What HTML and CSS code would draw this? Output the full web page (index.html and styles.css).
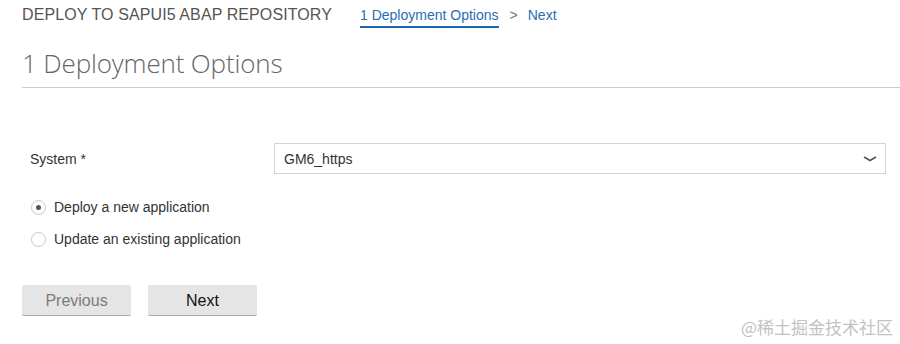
FILE: index.html
```html
<!DOCTYPE html>
<html lang="en">
<head>
  <meta charset="UTF-8" />
  <title>Deploy to SAPUI5 ABAP Repository</title>
  <link rel="stylesheet" href="styles.css">
</head>
<body>

  <div class="wizard">
    <div class="wizard-header">
      <span class="wizard-title">DEPLOY TO SAPUI5 ABAP REPOSITORY</span>
      <div class="steps">
        <a class="step active">1 Deployment Options</a>
        <span class="sep">&gt;</span>
        <a class="step">Next</a>
      </div>
    </div>

    <h1 class="page-title">1 Deployment Options</h1>

    <div class="form">
      <div class="form-row">
        <label class="form-label">System *</label>
        <div class="select">
          <span class="select-value">GM6_https</span>
          <svg class="chevron" width="14" height="6" viewBox="0 0 14 6">
            <polyline points="1,1 7,4.5 13,1" fill="none" stroke="#555" stroke-width="1.6" />
          </svg>
        </div>
      </div>

      <div class="radios">
        <label class="radio">
          <span class="radio-circle checked"></span>
          Deploy a new application
        </label>
        <label class="radio">
          <span class="radio-circle"></span>
          Update an existing application
        </label>
      </div>
    </div>

    <div class="buttons">
      <button class="btn disabled">Previous</button>
      <button class="btn">Next</button>
    </div>
  </div>

  <div class="watermark">@稀土掘金技术社区</div>

</body>
</html>
```

FILE: styles.css
```css
body {
  margin: 0;
  font-family: "Liberation Sans", Arial, sans-serif;
  color: #333;
  background: #fff;
}
.wizard {
  padding: 5px 0 0 22px;
}
.wizard-header {
  display: flex;
  align-items: flex-start;
  height: 23px;
}
.wizard-title {
  font-size: 16px;
  line-height: 20px;
  letter-spacing: 0.1px;
  color: #555;
}
.steps {
  display: flex;
  margin-left: 28px;
  font-size: 14px;
  line-height: 20px;
}
.step {
  color: #2a6db0;
}
.step.active {
  padding-bottom: 1px;
  border-bottom: 2px solid #1d68ad;
}
.sep {
  color: #777;
  margin: 0 10px 0 11px;
}
.page-title {
  margin: 17px 0 0;
  padding-bottom: 6px;
  border-bottom: 1px solid #ccc;
  font-family: "Open Sans", sans-serif;
  font-weight: 300;
  font-size: 26px;
  line-height: 36px;
  letter-spacing: -0.15px;
  color: #666;
}
.form {
  padding: 55px 14px 0 8px;
}
.form-row {
  display: flex;
  align-items: center;
}
.form-label {
  width: 244px;
  font-size: 14px;
}
.select {
  flex: 1;
  display: flex;
  align-items: center;
  justify-content: space-between;
  height: 29px;
  border: 1px solid #d4d4d4;
  padding: 0 8px 0 9px;
  font-size: 14px;
  color: #333;
}
.chevron {
  display: block;
}
.radios {
  padding-top: 17px;
}
.radio {
  display: flex;
  align-items: center;
  height: 32px;
  font-size: 14px;
  color: #333;
}
.radio-circle {
  box-sizing: border-box;
  width: 15px;
  height: 15px;
  margin: 0 8px 0 1px;
  border: 1px solid #c8c8c8;
  border-radius: 50%;
  display: flex;
  align-items: center;
  justify-content: center;
}
.radio-circle.checked::after {
  content: "";
  width: 5px;
  height: 5px;
  border-radius: 50%;
  background: #555;
}
.buttons {
  display: flex;
  gap: 17px;
  margin-top: 30px;
}
.btn {
  width: 109px;
  height: 31px;
  border: none;
  border-bottom: 1px solid #aaa;
  border-radius: 2px;
  background: #e5e5e5;
  font-family: "Liberation Sans", Arial, sans-serif;
  font-size: 16px;
  color: #111;
  padding: 2px 0 0;
}
.btn.disabled {
  color: #7a7a7a;
}
.watermark {
  position: absolute;
  right: 7px;
  bottom: 5px;
  font-family: "Noto Sans CJK SC", sans-serif;
  font-size: 17px;
  color: #c2c2c2;
}
```
